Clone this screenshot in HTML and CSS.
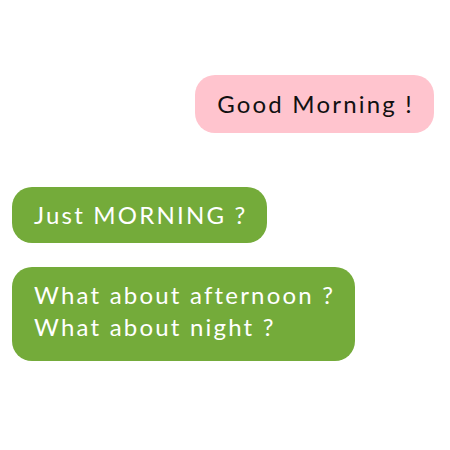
FILE: index.html
```html
<!DOCTYPE html>
<html>
<head>
<meta charset="utf-8">
<link rel="stylesheet" href="styles.css">
</head>
<body>
<div class="chat">
  <div class="bubble sent">Good Morning !</div>
  <div class="bubble recv first">Just MORNING ?</div>
  <div class="bubble recv multi">What about afternoon ?<br>What about night ?</div>
</div>
</body>
</html>
```
FILE: styles.css
```css
html, body {
  margin: 0;
  padding: 0;
  background: #ffffff;
}
.chat {
  display: flex;
  flex-direction: column;
  align-items: flex-start;
  padding: 75px 16px 0 12px;
  font-family: "Lato", sans-serif;
  font-weight: 400;
  font-size: 24px;
  line-height: 32px;
  letter-spacing: 2.2px;
}
.bubble {
  padding: 12px 20px 12px 22px;
  border-radius: 20px;
}
.sent {
  align-self: flex-end;
  background: #ffc4ce;
  color: #111111;
  padding-top: 13px;
  padding-bottom: 13px;
}
.recv {
  background: #74ab3a;
  color: #ffffff;
}
.first {
  margin-top: 54px;
}
.multi {
  margin-top: 24px;
  padding-bottom: 18px;
}
```
